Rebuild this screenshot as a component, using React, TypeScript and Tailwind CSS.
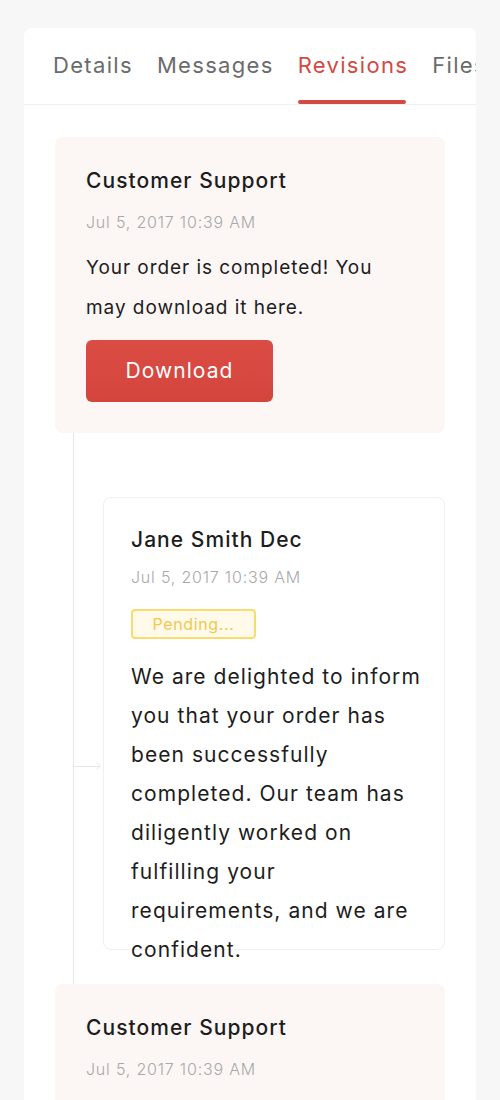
import React from 'react';

const font = { fontFamily: 'Inter, "Noto Sans", sans-serif' };

const tabs = ['Details', 'Messages', 'Revisions', 'Files'];

function SupportCard({ children }: { children?: React.ReactNode }) {
  return (
    <div className="w-[390px] rounded-lg bg-[#fcf6f5] px-[31px] pt-[30px] pb-[31px]">
      <h3 className="text-[21px] font-medium leading-[28px] tracking-[0.05em] text-[#1d1d1d]">Customer Support</h3>
      <p className="mt-[15px] text-[16px] font-light leading-[24px] tracking-[0.05em] text-[#a9a9a9]">Jul 5, 2017 10:39 AM</p>
      {children}
    </div>
  );
}

export default function App() {
  return (
    <div className="min-h-screen bg-[#f7f7f7] px-[24px] pt-[28px]" style={font}>
      <div className="h-[1072px] overflow-hidden rounded-t-lg bg-white">
        <div className="flex h-[77px] gap-[24px] overflow-hidden whitespace-nowrap border-b border-[#efefef] pl-[29px]">
          {tabs.map((t) => {
            const active = t === 'Revisions';
            return (
              <div key={t} className="relative flex shrink-0 items-center pb-[2px]">
                <span className={`text-[22px] leading-none tracking-[0.06em] ${active ? 'text-[#d24a42]' : 'text-[#6b6b6b]'}`}>{t}</span>
                {active && <span className="absolute bottom-0 left-0 right-[2px] h-[4px] rounded-full bg-[#d24a42]" />}
              </div>
            );
          })}
        </div>

        <div className="px-[31px] pt-[32px]">
          <SupportCard>
            <p className="mt-[14px] text-[19px] leading-[40px] tracking-[0.05em] text-[#1d1d1d]">
              Your order is completed! You may download it here.
            </p>
            <button className="mt-[12px] h-[62px] w-[187px] rounded-md bg-gradient-to-b from-[#db4c44] to-[#d4453e] text-[21px] tracking-[0.05em] text-white">
              Download
            </button>
          </SupportCard>

          <div className="relative ml-[18px] border-l border-[#e6e6e6] pb-[34px] pt-[64px] pl-[29px]">
            <div className="absolute left-0 top-[329px] flex items-center">
              <span className="h-px w-[26px] bg-[#e6e6e6]" />
              <svg width="5" height="8" viewBox="0 0 5 8" className="-ml-[4px]">
                <path d="M0.5 0.5 L4.5 4 L0.5 7.5" fill="none" stroke="#e6e6e6" strokeWidth="1" />
              </svg>
            </div>
            <div className="h-[453px] w-[342px] rounded-lg border border-[#f0f0f0] bg-white pl-[27px] pr-[20px] pt-[28px]">
              <h3 className="text-[21px] font-medium leading-[28px] tracking-[0.05em] text-[#1d1d1d]">Jane Smith Dec</h3>
              <p className="mt-[11px] text-[16px] font-light leading-[24px] tracking-[0.05em] text-[#a9a9a9]">Jul 5, 2017 10:39 AM</p>
              <span className="mt-[20px] inline-flex h-[30px] w-[125px] items-center justify-center rounded-[4px] border-2 border-[#fadb6e] bg-[#fffaea] text-[16px] tracking-[0.04em] text-[#f3c84b]">
                Pending...
              </span>
              <p className="mt-[18px] text-[21px] leading-[39px] tracking-[0.05em] text-[#1d1d1d]">
                We are delighted to inform you that your order has been successfully completed. Our team has diligently worked on fulfilling your requirements, and we are confident.
              </p>
            </div>
          </div>

          <SupportCard />
        </div>
      </div>
    </div>
  );
}
